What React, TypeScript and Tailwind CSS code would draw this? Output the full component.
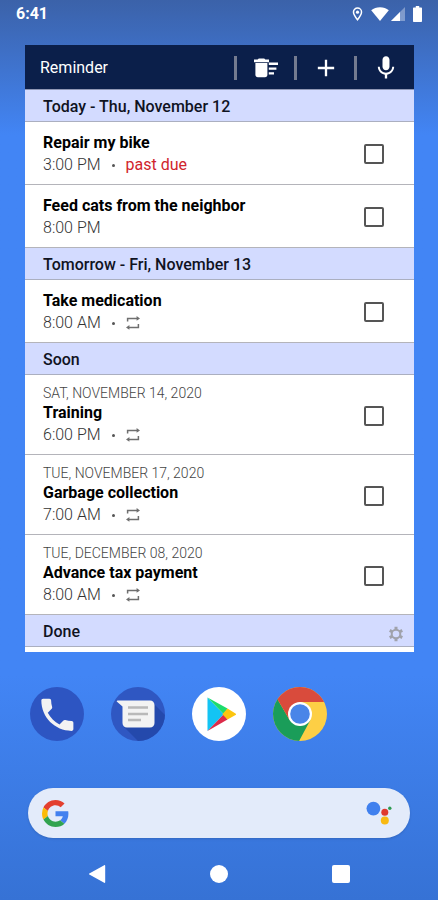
import { useState } from 'react'
import { MdMic, MdAdd } from 'react-icons/md'

interface Reminder {
  id: string
  title: string
  time: string
  date?: string
  pastDue?: boolean
  repeats?: boolean
}

interface Section {
  label: string
  items: Reminder[]
}

const sections: Section[] = [
  {
    label: 'Today - Thu, November 12',
    items: [
      { id: 'bike', title: 'Repair my bike', time: '3:00 PM', pastDue: true },
      { id: 'cats', title: 'Feed cats from the neighbor', time: '8:00 PM' },
    ],
  },
  {
    label: 'Tomorrow - Fri, November 13',
    items: [{ id: 'medication', title: 'Take medication', time: '8:00 AM', repeats: true }],
  },
  {
    label: 'Soon',
    items: [
      { id: 'training', title: 'Training', time: '6:00 PM', date: 'SAT, NOVEMBER 14, 2020', repeats: true },
      { id: 'garbage', title: 'Garbage collection', time: '7:00 AM', date: 'TUE, NOVEMBER 17, 2020', repeats: true },
      { id: 'tax', title: 'Advance tax payment', time: '8:00 AM', date: 'TUE, DECEMBER 08, 2020', repeats: true },
    ],
  },
  { label: 'Done', items: [] },
]

function SweepIcon() {
  return (
    <svg viewBox="0 0 24 20" className="h-5 w-6" fill="currentColor" aria-hidden="true">
      <path d="M0 1.6h3.6L4.8.4h5.4l1.200 1.200H15v2.600H0z" />
      <path d="M1.400 5h12v11.800c0 1.400-1 2.400-2.400 2.400H3.800c-1.400 0-2.400-1-2.400-2.400z" />
      <path d="M14.800 4.600H24v2.400h-9.200zM14.800 9.400h7.600v2.400h-7.600zM14.800 14.200h5.200v2.400h-5.200z" />
    </svg>
  )
}

function RepeatIcon() {
  return (
    <svg viewBox="0 0 14 14" className="h-[14px] w-[14px]" aria-label="Repeats">
      <path d="M1.600 5.600V2.400h9.600M12.400 8v3.400H2.800" fill="none" stroke="#6f6f6f" strokeWidth="1.500" />
      <path d="M10.600 0 14 2.400l-3.400 2.400zM3.400 9 0 11.400l3.400 2.400z" fill="#6f6f6f" />
    </svg>
  )
}

function GearIcon() {
  return (
    <svg viewBox="0 0 16 16" className="h-4 w-4" fill="none" stroke="currentColor" aria-hidden="true">
      <circle cx="8" cy="8" r="4.300" strokeWidth="2" />
      <path
        d="M8 .8v2.600M8 12.600v2.600M1.760 4.400l2.260 1.300M11.980 10.300l2.260 1.300M1.760 11.600l2.260-1.300M11.980 5.700l2.260-1.300"
        strokeWidth="3"
      />
    </svg>
  )
}

function StatusBar() {
  return (
    <header className="flex h-[45px] items-start justify-between px-4 pt-1 text-white">
      <span className="text-base leading-5 font-bold">6:41</span>
      <div className="flex h-5 items-center">
        <svg viewBox="0 0 12 16" className="mr-2 h-[14px] w-[11px]" aria-hidden="true">
          <path
            d="M6 1.200A4.600 4.600 0 0 0 1.400 5.800C1.400 9 6 14.600 6 14.600S10.600 9 10.600 5.800A4.600 4.600 0 0 0 6 1.200z"
            fill="none"
            stroke="#fff"
            strokeWidth="1.700"
          />
          <circle cx="6" cy="5.900" r="1.800" fill="#fff" />
        </svg>
        <svg viewBox="0 0 18 14" className="mr-[2px] h-[14px] w-[18px]" aria-hidden="true">
          <path d="M9 14 .2 3.200C2.600 1.200 5.600.2 9 .2s6.400 1 8.800 3z" fill="#fff" />
        </svg>
        <svg viewBox="0 0 14 14" className="mr-2 h-[14px] w-[14px]" aria-hidden="true">
          <path d="M14 0v14H0z" fill="#fff" fillOpacity=".35" />
          <path d="M9 5v9H0z" fill="#fff" />
        </svg>
        <svg viewBox="0 0 9 16" className="h-4 w-[9px]" aria-hidden="true">
          <path d="M2.800 0h3.400v1.600H8c.6 0 1 .4 1 1V15c0 .6-.4 1-1 1H1c-.6 0-1-.4-1-1V2.600c0-.6.4-1 1-1h1.800z" fill="#fff" />
        </svg>
      </div>
    </header>
  )
}

function ReminderRow({ item, checked, onToggle }: { item: Reminder; checked: boolean; onToggle: () => void }) {
  return (
    <li className="flex items-center justify-between border-b border-[#b4b4ba] bg-white pt-[10px] pr-[30px] pb-2 pl-[18px]">
      <label htmlFor={item.id} className="flex flex-col">
        {item.date && <span className="text-sm leading-[17px] font-light text-[#444]">{item.date}</span>}
        <span className="text-base leading-[22px] font-bold text-black">{item.title}</span>
        <span className="flex items-center text-base leading-[22px] font-light text-[#333]">
          {item.time}
          {(item.pastDue || item.repeats) && <span className="mx-[11px] h-[3px] w-[3px] rounded-full bg-[#555]" />}
          {item.pastDue && <span className="font-normal text-[#d0242c]">past due</span>}
          {item.repeats && <RepeatIcon />}
        </span>
      </label>
      <input
        id={item.id}
        type="checkbox"
        checked={checked}
        onChange={onToggle}
        className="h-5 w-5 shrink-0 appearance-none rounded-[2px] border-2 border-[#555] bg-white checked:bg-[#555]"
      />
    </li>
  )
}

function ReminderWidget() {
  const [done, setDone] = useState<Set<string>>(new Set())

  const toggle = (id: string) => {
    setDone(prev => {
      const next = new Set(prev)
      if (next.has(id)) next.delete(id)
      else next.add(id)
      return next
    })
  }

  return (
    <main className="mr-6 ml-[25px] bg-white pb-[5px]">
      <div className="flex h-[45px] items-center border-b border-[#8f97b5] bg-[#0b1f4a] pt-[2px] pl-[15px] text-white">
        <h1 className="grow text-base font-normal">Reminder</h1>
        <span className="h-6 w-[3px] bg-[#747b90]" />
        <button aria-label="Clear done" className="flex w-[57px] justify-center">
          <SweepIcon />
        </button>
        <span className="h-6 w-[3px] bg-[#747b90]" />
        <button aria-label="Add reminder" className="flex w-[57px] justify-center">
          <MdAdd className="h-7 w-7" />
        </button>
        <span className="h-6 w-[3px] bg-[#747b90]" />
        <button aria-label="Voice input" className="flex w-[57px] justify-center">
          <MdMic className="h-7 w-7" />
        </button>
      </div>
      {sections.map(section => (
        <section key={section.label}>
          <div className="flex h-8 items-center justify-between border-b border-[#abafc0] bg-[#d3dbff] pt-[2px] pr-[10px] pl-[18px]">
            <h2 className="text-base font-medium text-[#10131f]">{section.label}</h2>
            {section.label === 'Done' && (
              <button aria-label="Settings" className="mt-1 text-[#a0a2ab]">
                <GearIcon />
              </button>
            )}
          </div>
          <ul>
            {section.items.map(item => (
              <ReminderRow key={item.id} item={item} checked={done.has(item.id)} onToggle={() => toggle(item.id)} />
            ))}
          </ul>
        </section>
      ))}
    </main>
  )
}

function PhoneIcon() {
  return (
    <svg viewBox="0 0 54 54" className="h-[54px] w-[54px]" aria-hidden="true">
      <circle cx="27" cy="27" r="27" fill="#2d55c2" />
      <path
        transform="translate(6 6.500) scale(1.780)"
        d="M6.620 10.790c1.440 2.830 3.760 5.140 6.590 6.590l2.200-2.200c.27-.27.67-.36 1.020-.24 1.120.37 2.330.57 3.570.57.55 0 1 .45 1 1V20c0 .55-.45 1-1 1-9.390 0-17-7.610-17-17 0-.55.45-1 1-1h3.500c.55 0 1 .45 1 1 0 1.250.2 2.450.57 3.570.11.35.03.74-.25 1.020l-2.200 2.200z"
        fill="#f3f3f3"
      />
    </svg>
  )
}

function MessagesIcon() {
  return (
    <svg viewBox="0 0 54 54" className="h-[54px] w-[54px]" aria-hidden="true">
      <defs>
        <clipPath id="messages-disc">
          <circle cx="27" cy="27" r="27" />
        </clipPath>
      </defs>
      <g clipPath="url(#messages-disc)">
        <path d="M0 0h54v54H0z" fill="#2f57c2" />
        <path d="M42 16 60 34v26H33L13 40z" fill="#2449ac" />
      </g>
      <path d="M6.600 13.500H39c2.700 0 4.500 1.800 4.500 4.500v18c0 2.700-1.800 4.500-4.500 4.500H16c-2.700 0-4.500-1.800-4.500-4.500V19.500L6 14.800c-.5-.5-.2-1.300.6-1.300z" fill="#f3f3f3" />
      <path d="M17 20.500h20M17 27h20M17 33h13" stroke="#b9b9b9" strokeWidth="2.600" />
    </svg>
  )
}

function PlayIcon() {
  return (
    <svg viewBox="0 0 54 54" className="h-[54px] w-[54px]" aria-hidden="true">
      <circle cx="27" cy="27" r="27" fill="#fff" />
      <path d="M15.500 10.500v33.500L31.800 27.300z" fill="#13c4f4" />
      <path d="M15.500 10.500 35.500 21.600 31.800 27.300z" fill="#1ddb6c" />
      <path d="M15.500 44 35.500 32.600 31.800 27.300z" fill="#dc2b49" />
      <path d="M35.500 21.600 43.500 26.400c.8.5.8 1.200 0 1.600l-8 4.600-5.200-5.300z" fill="#fcc50f" />
    </svg>
  )
}

function ChromeIcon() {
  return (
    <svg viewBox="0 0 54 54" className="h-[54px] w-[54px]" aria-hidden="true">
      <defs>
        <clipPath id="chrome-disc">
          <circle cx="27" cy="27" r="27" />
        </clipPath>
      </defs>
      <g clipPath="url(#chrome-disc)">
        <path d="M0 0h54v54H0z" fill="#fdcf45" />
        <path d="M0 0 5.500 14 16.600 33 27 39l10.400-6L25 56H-2z" fill="#1a9d59" />
        <path d="M27 15h30V0H0v4l5.500 10 11.100 19z" fill="#d94b3c" />
      </g>
      <circle cx="27" cy="27" r="12" fill="#fff" />
      <circle cx="27" cy="27" r="9.800" fill="#4a85e8" />
    </svg>
  )
}

function Dock() {
  return (
    <nav aria-label="Apps" className="mt-[35px] grid grid-cols-5 px-4">
      <button aria-label="Phone" className="flex justify-center">
        <PhoneIcon />
      </button>
      <button aria-label="Messages" className="flex justify-center">
        <MessagesIcon />
      </button>
      <button aria-label="Play Store" className="flex justify-center">
        <PlayIcon />
      </button>
      <button aria-label="Chrome" className="flex justify-center">
        <ChromeIcon />
      </button>
    </nav>
  )
}

function SearchBar() {
  return (
    <form role="search" className="mx-7 mt-[47px] flex h-[50px] items-center rounded-full bg-[#e3ebfa] pr-[18px] pl-[14px] shadow-sm">
      <svg viewBox="0 0 48 48" className="h-[27px] w-[27px] shrink-0" aria-hidden="true">
        <path fill="#e33f2f" d="M24 9.500c3.540 0 6.710 1.220 9.210 3.600l6.850-6.850C35.900 2.380 30.470 0 24 0 14.620 0 6.510 5.380 2.560 13.220l7.980 6.190C12.430 13.720 17.740 9.500 24 9.500z" />
        <path fill="#4280ef" d="M46.980 24.550c0-1.570-.15-3.090-.38-4.550H24v9.020h12.940c-.58 2.960-2.260 5.480-4.780 7.180l7.730 6c4.510-4.180 7.090-10.360 7.090-17.650z" />
        <path fill="#fbbb07" d="M10.530 28.590A14.500 14.500 0 0 1 9.770 24c0-1.600.27-3.140.76-4.590l-7.980-6.190A23.900 23.900 0 0 0 0 24c0 3.880.92 7.540 2.560 10.780z" />
        <path fill="#31a350" d="M24 48c6.480 0 11.930-2.130 15.890-5.810l-7.730-6c-2.150 1.450-4.920 2.300-8.160 2.300-6.260 0-11.570-4.220-13.470-9.910l-7.980 6.190C6.510 42.620 14.620 48 24 48z" />
      </svg>
      <input type="text" aria-label="Search" className="h-full min-w-0 grow bg-transparent px-3 text-base outline-none" />
      <button type="button" aria-label="Assistant" className="shrink-0">
        <svg viewBox="0 0 26 26" className="h-[26px] w-[26px]" aria-hidden="true">
          <circle cx="7.400" cy="8.600" r="6.900" fill="#4080ee" />
          <circle cx="18.800" cy="12.200" r="3.500" fill="#e0392d" />
          <circle cx="18.800" cy="20.400" r="4" fill="#f8b912" />
          <circle cx="23.800" cy="8.200" r="1.700" fill="#2f9b51" />
        </svg>
      </button>
    </form>
  )
}

function NavBar() {
  return (
    <footer className="mt-[27px] grid grid-cols-3 px-9 pb-[17px] text-white">
      <button aria-label="Back" className="flex justify-center">
        <svg viewBox="0 0 18 18" className="h-[18px] w-[18px]" fill="currentColor" aria-hidden="true">
          <path d="M16.200.2c.5-.3 1 0 1 .6v16.400c0 .6-.5.9-1 .6L1.300 9.600c-.5-.3-.5-.9 0-1.200z" />
        </svg>
      </button>
      <button aria-label="Home" className="flex justify-center">
        <span className="h-[18px] w-[18px] rounded-full bg-white" />
      </button>
      <button aria-label="Recent apps" className="flex justify-center">
        <span className="h-[18px] w-[18px] rounded-[2px] bg-white" />
      </button>
    </footer>
  )
}

export default function App() {
  return (
    <div className="min-h-screen bg-linear-to-b from-[#3b62a9] from-0% via-[#4285f5] via-15% to-[#4285f5] to-75% font-['Roboto',sans-serif]">
      <div className="min-h-screen bg-linear-to-b from-transparent from-75% to-[#3672d5]">
        <StatusBar />
        <ReminderWidget />
        <Dock />
        <SearchBar />
        <NavBar />
      </div>
    </div>
  )
}
